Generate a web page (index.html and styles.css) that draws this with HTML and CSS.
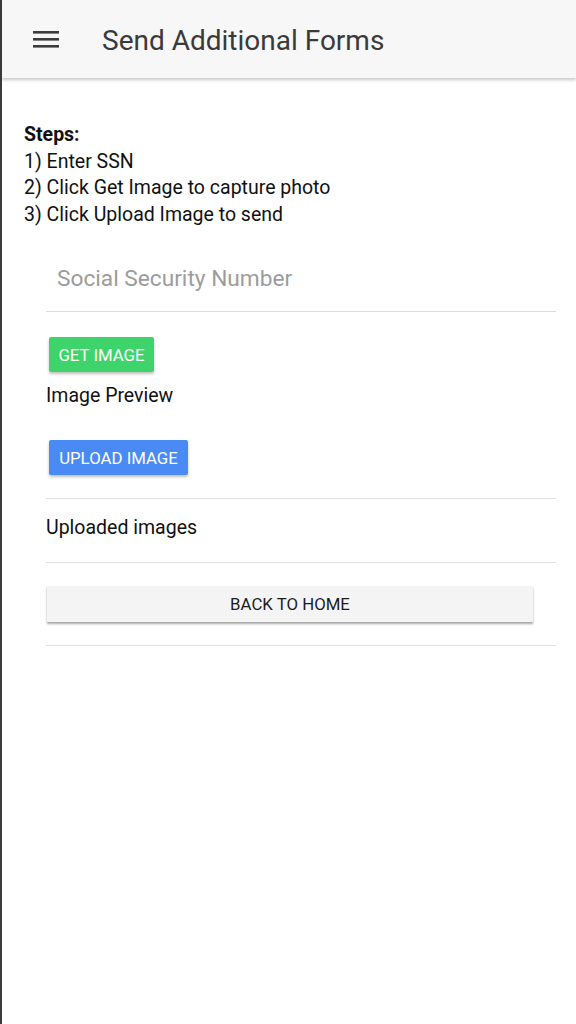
FILE: index.html
```html
<!DOCTYPE html>
<html>
<head>
    <title>Send Additional Forms</title>
    <link rel="stylesheet" href="styles.css">
</head>
<body>
    <div class="topbar">
        <span class="menu-icon">
            <svg width="26" height="18" viewBox="0 0 26 18">
                <rect x="0" y="1" width="26" height="2.6" fill="#3c3c3c"/>
                <rect x="0" y="8" width="26" height="2.6" fill="#3c3c3c"/>
                <rect x="0" y="15" width="26" height="2.6" fill="#3c3c3c"/>
            </svg>
        </span>
        <span class="topbar-title">Send Additional Forms</span>
    </div>

    <div class="steps">
        <b>Steps:</b><br>
        1) Enter SSN<br>
        2) Click Get Image to capture photo<br>
        3) Click Upload Image to send
    </div>

    <div class="panel">
        <input type="text" class="ssn-input" placeholder="Social Security Number">

        <button class="btn btn-green">GET IMAGE</button>
        <div class="preview-label">Image Preview</div>

        <button class="btn btn-blue">UPLOAD IMAGE</button>

        <div class="uploaded">Uploaded images</div>

        <div class="back-row">
            <button class="btn-back">BACK TO HOME</button>
        </div>
    </div>
</body>
</html>
```

FILE: styles.css
```css
html, body {
    height: 100%;
}

body {
    margin: 0;
    padding: 0;
    font-family: Roboto, "Liberation Sans", sans-serif;
    background-color: #fff;
    border-left: 2px solid #3a3a3a;
    box-sizing: border-box;
    color: #111;
}

.topbar {
    height: 78px;
    background-color: #f7f7f7;
    display: flex;
    align-items: center;
    box-shadow: 0 2px 3px rgba(0, 0, 0, 0.22);
}

.menu-icon {
    display: flex;
    margin-left: 31px;
    margin-top: -1px;
}

.topbar-title {
    margin-left: 43px;
    font-size: 28px;
    color: #3a3a3a;
    margin-top: 2px;
}

.steps {
    padding: 44px 0 0 22px;
    font-size: 19.5px;
    line-height: 26.5px;
}

.panel {
    margin: 21px 20px 0 44px;
}

.ssn-input {
    display: block;
    width: 100%;
    box-sizing: border-box;
    height: 63px;
    padding: 0 0 4px 11px;
    border: none;
    border-bottom: 1px solid #dcdcdc;
    font-family: Roboto, "Liberation Sans", sans-serif;
    font-size: 22.7px;
    outline: none;
}

.ssn-input::placeholder {
    color: #9c9c9c;
}

.btn {
    display: block;
    border: none;
    border-radius: 2px;
    color: #fff;
    font-family: Roboto, "Liberation Sans", sans-serif;
    font-size: 16.8px;
    height: 35px;
    padding: 0 8px;
    margin-left: 3px;
    box-shadow: 0 2px 3px rgba(0, 0, 0, 0.25);
}

.btn-green {
    margin-top: 25px;
    width: 105px;
    background-color: #3ed46b;
}

.btn-blue {
    margin-top: 33px;
    width: 139px;
    background-color: #4a8af4;
}

.preview-label {
    font-size: 19.5px;
    margin-top: 12px;
}

.uploaded {
    margin-top: 23px;
    border-top: 1px solid #e0e0e0;
    border-bottom: 1px solid #e0e0e0;
    font-size: 19.5px;
    padding: 17px 0 23px 0;
}

.back-row {
    padding: 23px 0 23px 0;
    border-bottom: 1px solid #e0e0e0;
}

.btn-back {
    display: block;
    width: 486px;
    height: 36px;
    margin-left: 1px;
    border: none;
    background-color: #f4f4f4;
    color: #1c1c1c;
    font-family: Roboto, "Liberation Sans", sans-serif;
    font-size: 16.8px;
    box-shadow: 0 2px 2px rgba(0, 0, 0, 0.35);
}
```
